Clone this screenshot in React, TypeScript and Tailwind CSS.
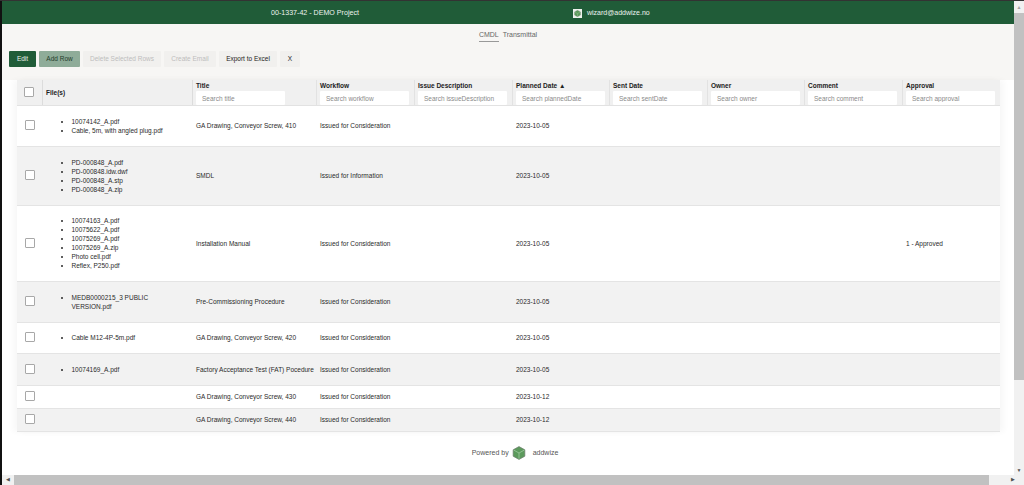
import React from 'react';

interface RowData {
  files: string[];
  title: string;
  workflow: string;
  planned: string;
  approval?: string;
  height: string;
}

const rows: RowData[] = [
  { files: ['10074142_A.pdf', 'Cable, 5m, with angled plug.pdf'], title: 'GA Drawing, Conveyor Screw, 410', workflow: 'Issued for Consideration', planned: '2023-10-05', height: 'h-[41px]' },
  { files: ['PD-000848_A.pdf', 'PD-000848.idw.dwf', 'PD-000848_A.stp', 'PD-000848_A.zip'], title: 'SMDL', workflow: 'Issued for Information', planned: '2023-10-05', height: 'h-[59px]' },
  { files: ['10074163_A.pdf', '10075622_A.pdf', '10075269_A.pdf', '10075269_A.zip', 'Photo cell.pdf', 'Reflex, P250.pdf'], title: 'Installation Manual', workflow: 'Issued for Consideration', planned: '2023-10-05', approval: '1 - Approved', height: 'h-[76px]' },
  { files: ['MEDB0000215_3 PUBLIC VERSION.pdf'], title: 'Pre-Commissioning Procedure', workflow: 'Issued for Consideration', planned: '2023-10-05', height: 'h-[41px]' },
  { files: ['Cable M12-4P-5m.pdf'], title: 'GA Drawing, Conveyor Screw, 420', workflow: 'Issued for Consideration', planned: '2023-10-05', height: 'h-[31px]' },
  { files: ['10074169_A.pdf'], title: 'Factory Acceptance Test (FAT) Pocedure', workflow: 'Issued for Consideration', planned: '2023-10-05', height: 'h-[32px]' },
  { files: [], title: 'GA Drawing, Conveyor Screw, 430', workflow: 'Issued for Consideration', planned: '2023-10-12', height: 'h-[23px]' },
  { files: [], title: 'GA Drawing, Conveyor Screw, 440', workflow: 'Issued for Consideration', planned: '2023-10-12', height: 'h-[23px]' },
];

const searchColumns = [
  { label: 'Title', placeholder: 'Search title', width: 'w-[124px]' },
  { label: 'Workflow', placeholder: 'Search workflow', width: 'w-[98px]' },
  { label: 'Issue Description', placeholder: 'Search issueDescription', width: 'w-[98px]' },
  { label: 'Planned Date ▲', placeholder: 'Search plannedDate', width: 'w-[97px]' },
  { label: 'Sent Date', placeholder: 'Search sentDate', width: 'w-[98px]' },
  { label: 'Owner', placeholder: 'Search owner', width: 'w-[97px]' },
  { label: 'Comment', placeholder: 'Search comment', width: 'w-[98px]' },
  { label: 'Approval', placeholder: 'Search approval', width: 'w-[97px]' },
];

const Checkbox = () => (
  <span className="block w-[10px] h-[10px] rounded-[1px] border border-[#a8a8a8] bg-white" />
);

const AddwizeLogo = ({ size }: { size: number }) => (
  <svg width={size} height={size} viewBox="0 0 24 24">
    <polygon points="12,1 22,6.5 22,17.5 12,23 2,17.5 2,6.5" fill="#5c9a5c" stroke="#6f7c6f" strokeWidth="1.2" />
    <path d="M12 12 L12 22 M12 12 L3 7 M12 12 L21 7" stroke="#a8d0a8" strokeWidth="1.2" fill="none" />
  </svg>
);

export default function App() {
  return (
    <div className="w-[1024px] h-[485px] overflow-hidden flex flex-col bg-white text-[6.5px] text-[#2a2a2a] border-t border-[#333] font-['Liberation_Sans',Arial,sans-serif]">
      <div className="flex flex-1 min-h-0">
        <div className="flex-1 min-w-0 flex flex-col border-l-2 border-[#111]">
          {/* Top bar */}
          <header className="h-[23px] shrink-0 bg-[#205c38] flex items-center pt-[1px]">
            <span className="ml-[269px] w-[302px] text-[7.1px] text-[#eef3ef]">00-1337-42 - DEMO Project</span>
            <span className="w-[9px] h-[9px] bg-[#eef2ee] flex items-center justify-center mr-[5px]">
              <AddwizeLogo size={7} />
            </span>
            <span className="text-[7px] text-[#eef3ef]">wizard@addwize.no</span>
          </header>

          {/* Tabs and buttons */}
          <div className="h-[56px] shrink-0 bg-[#f7f6f4] flex flex-col">
            <div className="flex justify-center gap-[4px] pt-[6px] text-[7px] text-[#666]">
              <span className="h-[12px] border-b border-[#999]">CMDL</span>
              <span>Transmittal</span>
            </div>
            <div className="flex items-center gap-[3px] ml-[7px] mt-[9px] text-[6.5px]">
              <button className="h-[16px] w-[27px] bg-[#205c38] text-[#e8efe9] rounded-[1px]">Edit</button>
              <button className="h-[16px] w-[41px] bg-[#8fac99] text-[#1f3d2a] rounded-[1px]">Add Row</button>
              <button className="h-[16px] w-[78px] bg-[#f1f0ee] text-[#bdbdbd] rounded-[1px]">Delete Selected Rows</button>
              <button className="h-[16px] w-[52px] bg-[#f1f0ee] text-[#bdbdbd] rounded-[1px]">Create Email</button>
              <button className="h-[16px] w-[58px] bg-[#f1f0ee] text-[#222] rounded-[1px]">Export to Excel</button>
              <button className="h-[16px] w-[20px] bg-[#f1f0ee] text-[#222] rounded-[1px]">X</button>
            </div>
          </div>

          {/* Table */}
          <div className="flex-1 min-h-0 bg-white pl-[15px] pr-[14px]">
            <div className="shadow-[-4px_0_6px_rgba(0,0,0,0.03),4px_0_6px_rgba(0,0,0,0.03)]">
              <div className="flex h-[26px] bg-[#f0f0f0] border-b border-[#e2e2e2]">
                <div className="w-[26px] shrink-0 flex items-center justify-center border-r border-[#dcdcdc] pb-[2px] pr-[1px]">
                  <Checkbox />
                </div>
                <div className="w-[150px] shrink-0 flex items-center pl-[3px] font-bold text-[#222] border-r border-[#dcdcdc]">File(s)</div>
                {searchColumns.map(col => (
                  <div key={col.label} className={`${col.width} shrink-0 pl-[3px] pr-[3px] border-r border-[#e2e2e2] last:border-r-0`}>
                    <div className="h-[11px] leading-[11px] font-bold text-[#222] whitespace-nowrap">{col.label}</div>
                    <input
                      readOnly
                      placeholder={col.placeholder}
                      className="block w-[89px] h-[14px] bg-white rounded-[1px] pl-[6px] text-[6.5px] placeholder:text-[#8a8a8a] outline-none"
                    />
                  </div>
                ))}
              </div>

              {rows.map((row, i) => (
                <div key={row.title} className={`flex items-center ${row.height} border-b border-[#e4e4e4] ${i % 2 === 1 ? 'bg-[#f2f2f2]' : 'bg-white'}`}>
                  <div className="w-[26px] shrink-0 flex justify-center pb-[2px] pr-[1px]"><Checkbox /></div>
                  <div className="w-[150px] shrink-0">
                    {row.files.length > 0 && (
                      <ul className="list-disc pl-[28.5px] pr-[28px] pb-[1px] leading-[9px]">
                        {row.files.map(f => <li key={f}>{f}</li>)}
                      </ul>
                    )}
                  </div>
                  <div className="w-[124px] shrink-0 pl-[3px] whitespace-nowrap">{row.title}</div>
                  <div className="w-[98px] shrink-0 pl-[3px] whitespace-nowrap">{row.workflow}</div>
                  <div className="w-[98px] shrink-0" />
                  <div className="w-[97px] shrink-0 pl-[3px]">{row.planned}</div>
                  <div className="w-[98px] shrink-0" />
                  <div className="w-[97px] shrink-0" />
                  <div className="w-[98px] shrink-0" />
                  <div className="w-[97px] shrink-0 pl-[3px]">{row.approval}</div>
                </div>
              ))}
            </div>

            {/* Footer */}
            <div className="flex items-center justify-center h-[42px] text-[7px] text-[#555] pl-[13px]">
              <span>Powered by</span>
              <span className="ml-[3px] mr-[7px]"><AddwizeLogo size={14} /></span>
              <span>addwize</span>
            </div>
          </div>
        </div>

        {/* Vertical scrollbar */}
        <div className="w-[10px] shrink-0 bg-[#f1f1f1] flex flex-col items-center">
          <span className="h-[12px] text-[5px] leading-[12px] text-[#a3a3a3]">▲</span>
          <div className="w-full h-[367px] bg-[#c1c1c1]" />
          <div className="flex-1" />
          <span className="h-[10px] text-[5px] leading-[10px] text-[#505050]">▼</span>
        </div>
      </div>

      {/* Horizontal scrollbar */}
      <div className="h-[10px] shrink-0 bg-[#f1f1f1] border-l-2 border-[#111] flex items-center">
        <span className="w-[12px] shrink-0 text-[5px] text-center text-[#505050]">◀</span>
        <div className="w-[975px] h-full bg-[#c1c1c1]" />
        <div className="flex-1" />
        <span className="w-[22px] shrink-0 text-[5px] text-center text-[#505050]">▶</span>
      </div>
    </div>
  );
}
